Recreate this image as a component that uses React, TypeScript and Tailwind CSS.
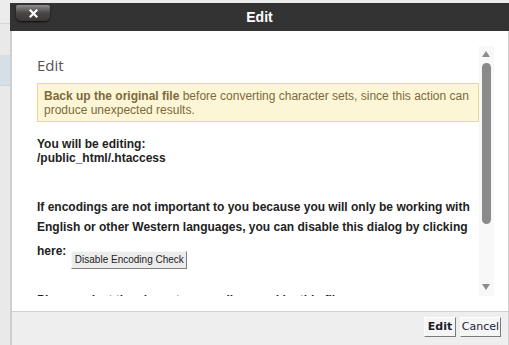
import React from "react";

const sans = { fontFamily: '"Liberation Sans", Arial, sans-serif' };

function ScrollTrack() {
  return (
    <div className="relative w-[15px] h-full bg-[#f8f8f8] shrink-0">
      {/* up arrow */}
      <div className="absolute left-[3px] top-[5px] w-0 h-0 border-l-[4.5px] border-r-[4.5px] border-b-[6px] border-l-transparent border-r-transparent border-b-[#8c8c8c]" />
      {/* thumb */}
      <div className="absolute left-[3px] top-[17px] w-[9px] h-[161px] rounded-full bg-[#8a8a8a]" />
      {/* down arrow */}
      <div className="absolute left-[3px] bottom-[6px] w-0 h-0 border-l-[4.5px] border-r-[4.5px] border-t-[6px] border-l-transparent border-r-transparent border-t-[#8c8c8c]" />
    </div>
  );
}

export default function App() {
  return (
    <div className="relative w-[509px] h-[345px] overflow-hidden bg-[#ececec]" style={sans}>
      {/* ========== page behind the dialog ========== */}
      <div className="w-[10px] flex flex-col">
        <div className="h-[24px] bg-[#ececec] border-b border-[#d6d6d6]" />
        <div className="h-[31px] bg-[#e9e9e9]" />
        <div className="h-[31px] bg-[#d6dfe8] border-b border-[#cfd4da]" />
        <div className="h-[259px] bg-[#e9e9e9]" />
      </div>

      {/* ========== DIALOG ========== */}
      <div className="absolute left-[10px] top-[3px] w-[499px] h-[342px] flex flex-col">
        {/* header */}
        <header className="relative h-[28px] bg-[#333333] flex items-center justify-center shrink-0">
          <button className="absolute left-[6px] top-[2px] w-[34px] h-[16px] rounded-b-[5px] rounded-t-[2px] bg-gradient-to-b from-[#8f8f8f] via-[#4a4646] to-[#3b3737] shadow-[0_1px_2px_rgba(0,0,0,0.8)] flex items-center justify-center">
            <svg width="9" height="9" viewBox="0 0 9 9" aria-hidden="true">
              <path d="M1.5 1.5l6 6M7.5 1.5l-6 6" stroke="#fff" strokeWidth="2.2" strokeLinecap="square" />
            </svg>
          </button>
          <h1 className="text-white font-bold text-[14px] leading-none">Edit</h1>
        </header>

        {/* body */}
        <div className="flex-1 min-h-0 bg-white border-l-2 border-r border-[#cfcfcf] pl-[25px] pr-[14px] pt-[15px] pb-[15px] flex">
          <div className="flex-1 min-w-0 overflow-hidden">
            <h2
              className="mt-[9px] h-[20px] leading-[20px] text-[15px] text-[#555]"
              style={{ fontFamily: '"Open Sans", sans-serif' }}
            >
              Edit
            </h2>

            <div className="mt-[8px] border border-[#e6da8e] bg-[#fcf6d6] pl-[6px] pr-[8px] pt-[5px] pb-[4px] text-[12px] leading-[14px] text-[#7c6a3c]">
              <strong>Back up the original file</strong> before converting character sets, since this action can
              produce unexpected results.
            </div>

            <p className="mt-[15px] text-[12px] leading-[14px] font-bold text-[#222]">
              You will be editing:
              <br />
              /public_html/.htaccess
            </p>

            <p className="mt-[32px] text-[12px] leading-[20px] font-bold text-[#222]">
              If encodings are not important to you because you will only be working with English or other Western
              languages, you can disable this dialog by clicking
            </p>
            <div className="mt-[7px] flex items-start gap-[5px]">
              <span className="text-[12px] leading-[14px] font-bold text-[#222]">here:</span>
              <button className="mt-[7px] h-[18px] w-[116px] bg-[#ececec] border border-t-[#f8f8f8] border-l-[#f8f8f8] border-r-[#808080] border-b-[#808080] text-[10px] text-[#222] leading-none">
                Disable Encoding Check
              </button>
            </div>

            <p className="mt-[24px] text-[12px] leading-[14px] font-bold text-[#222]">
              Please select the character encoding used by this file:
            </p>
          </div>
          <ScrollTrack />
        </div>

        {/* footer */}
        <footer className="h-[34px] shrink-0 bg-[#eeeeee] border-t border-l-2 border-r border-[#cfcfcf] flex items-start justify-end gap-[4px] pr-[7px] pt-[5px]">
          <button
            className="w-[32px] h-[20px] bg-[#f5f5f5] border border-t-white border-l-white border-r-[#7a7a7a] border-b-[#7a7a7a] text-[11px] font-bold text-[#1d1d2b]"
            style={{ fontFamily: '"DejaVu Sans", sans-serif' }}
          >
            Edit
          </button>
          <button
            className="w-[41px] h-[20px] bg-[#f5f5f5] border border-t-white border-l-white border-r-[#7a7a7a] border-b-[#7a7a7a] text-[11px] text-[#1d1d3b]"
            style={{ fontFamily: '"DejaVu Sans", sans-serif' }}
          >
            Cancel
          </button>
        </footer>
      </div>
    </div>
  );
}
